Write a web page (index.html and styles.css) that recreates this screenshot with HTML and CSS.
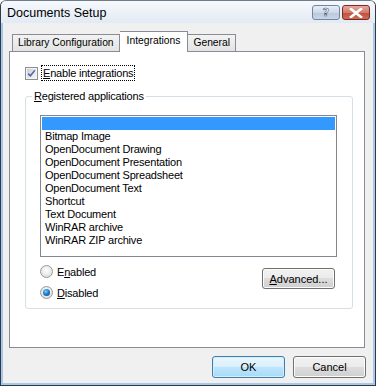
FILE: index.html
```html
<!DOCTYPE html>
<html lang="en">
<head>
    <meta charset="UTF-8">
    <title>Documents Setup</title>
    <link rel="stylesheet" href="styles.css">
</head>
<body>
    <div class="window">
        <div class="titlebar">
            <span class="title">Documents Setup</span>
            <div class="caption-buttons">
                <button class="cap-btn help-btn"><span>?</span></button>
                <button class="cap-btn close-btn">
                    <svg width="14" height="10" viewBox="0 0 14 10">
                        <path d="M2 1 L12 9 M12 1 L2 9" stroke="#fff" stroke-width="2.6" stroke-linecap="square"/>
                    </svg>
                </button>
            </div>
        </div>
        <div class="client">
            <div class="tabs">
                <div class="tab">Library Configuration</div>
                <div class="tab active">Integrations</div>
                <div class="tab">General</div>
            </div>
            <div class="panel">
                <label class="check-row">
                    <svg class="checkbox" width="13" height="13" viewBox="0 0 13 13">
                        <defs>
                            <linearGradient id="cbFill" x1="0" y1="0" x2="1" y2="1">
                                <stop offset="0" stop-color="#cbcfd5"/>
                                <stop offset="1" stop-color="#f6f6f6"/>
                            </linearGradient>
                        </defs>
                        <rect x="0.5" y="0.5" width="12" height="12" fill="#f4f4f4" stroke="#8e8f8f"/>
                        <rect x="2" y="2" width="9" height="9" fill="url(#cbFill)"/>
                        <path d="M3.2 6.6 L5.4 8.8 L9.8 3.4" fill="none" stroke="#4d64a6" stroke-width="1.5"/>
                    </svg>
                    <span class="focus"><u>E</u>nable integrations</span>
                </label>
                <fieldset class="group">
                    <legend><u>R</u>egistered applications</legend>
                    <ul class="listbox">
                        <li class="selected">&nbsp;</li>
                        <li>Bitmap Image</li>
                        <li>OpenDocument Drawing</li>
                        <li>OpenDocument Presentation</li>
                        <li>OpenDocument Spreadsheet</li>
                        <li>OpenDocument Text</li>
                        <li>Shortcut</li>
                        <li>Text Document</li>
                        <li>WinRAR archive</li>
                        <li>WinRAR ZIP archive</li>
                    </ul>
                    <div class="group-bottom">
                        <div class="radios">
                            <label class="radio-row">
                                <span class="radio"></span>
                                <span>E<u>n</u>abled</span>
                            </label>
                            <label class="radio-row">
                                <span class="radio checked"></span>
                                <span><u>D</u>isabled</span>
                            </label>
                        </div>
                        <button class="btn advanced"><u>A</u>dvanced...</button>
                    </div>
                </fieldset>
            </div>
            <div class="footer">
                <button class="btn default">OK</button>
                <button class="btn">Cancel</button>
            </div>
        </div>
    </div>
</body>
</html>
```
FILE: styles.css
```css
body {
    margin: 0;
    padding: 0;
    background: #ffffff;
    font-family: "Liberation Sans", Arial, sans-serif;
    font-size: 11px;
    letter-spacing: -0.2px;
    color: #000;
}
.window {
    width: 376px;
    height: 386px;
    box-sizing: border-box;
    border: 1px solid #2f3a46;
    border-top-color: #6f7c8a;
    border-radius: 6px 6px 0 0;
    background: #a7c8e8;
    padding: 0 2px 2px 2px;
    display: flex;
    flex-direction: column;
}
.titlebar {
    height: 22px;
    margin: 0 -2px;
    padding: 0 5px 0 6px;
    display: flex;
    align-items: center;
    justify-content: space-between;
    background: linear-gradient(#f6f9fc, #e2eaf4);
    border-radius: 5px 5px 0 0;
}
.title {
    font-family: "Liberation Sans", Arial, sans-serif;
    font-size: 12.5px;
    letter-spacing: 0;
    color: #000;
    margin-top: 1px;
}
.caption-buttons {
    display: flex;
    gap: 2px;
    margin-top: 1px;
}
.cap-btn {
    height: 15px;
    padding: 0;
    border-radius: 3px;
    display: flex;
    align-items: center;
    justify-content: center;
}
.help-btn {
    width: 28px;
    border: 1px solid #7286a0;
    background: linear-gradient(#e8eef6 0%, #cdd9e8 50%, #b8c8dc 51%, #c9d6e6 100%);
}
.help-btn span {
    font-family: "DejaVu Sans", sans-serif;
    font-size: 11px;
    font-weight: bold;
    color: #fff;
    -webkit-text-stroke: 0.6px #4a5d78;
    line-height: 1;
}
.close-btn {
    width: 28px;
    border: 1px solid #7a2a24;
    background: linear-gradient(#e8a99e 0%, #d27a6c 50%, #c14f3e 51%, #d06a54 100%);
}
.client {
    flex: 1;
    background: #f0f0f0;
    padding: 8px 6px 0 6px;
    display: flex;
    flex-direction: column;
}
.tabs {
    display: flex;
    align-items: flex-end;
    height: 20px;
    padding-left: 3px;
    position: relative;
    z-index: 1;
}
.tab {
    height: 17px;
    box-sizing: border-box;
    padding: 2px 5px 0 5px;
    border: 1px solid #898c95;
    border-bottom: none;
    border-left: none;
    background: linear-gradient(#f3f3f3, #e3e3e3);
    white-space: nowrap;
    font-size: 10.3px;
    letter-spacing: 0;
}
.tab:first-child {
    border-left: 1px solid #898c95;
}
.tab.active {
    height: 21px;
    margin-bottom: -1px;
    padding: 3px 7px 0 7px;
    background: #ffffff;
    border-left: none;
}
.panel {
    height: 297px;
    box-sizing: border-box;
    background: #ffffff;
    border: 1px solid #898c95;
    margin-right: 2px;
    padding: 13px 11px 0 15px;
}
.check-row {
    display: flex;
    align-items: center;
    gap: 2px;
}
.checkbox {
    margin-right: 1px;
}
.focus {
    border: 1px dotted #000;
    padding: 1px 1px 1px 1px;
}
.group {
    margin: 9px 0 0 0;
    padding: 13px 15px 10px 14px;
    border: 1px solid #d5dfe5;
    border-radius: 3px;
    height: 219px;
    box-sizing: border-box;
}
.group legend {
    padding: 0 2px;
    margin-left: -8px;
}
.listbox {
    list-style: none;
    margin: 0;
    padding: 1px;
    height: 142px;
    box-sizing: border-box;
    border: 1px solid #828790;
    background: #fff;
}
.listbox li {
    height: 13px;
    line-height: 13px;
    padding-left: 3px;
    white-space: nowrap;
}
.listbox li.selected {
    background: #3399ff;
}
.group-bottom {
    display: flex;
    justify-content: space-between;
    align-items: flex-start;
    margin-top: 8px;
}
.radios {
    display: flex;
    flex-direction: column;
    gap: 8px;
}
.radio-row {
    display: flex;
    align-items: center;
    gap: 4px;
}
.radio {
    width: 11px;
    height: 11px;
    border-radius: 50%;
    border: 1px solid #9a9a9a;
    background: radial-gradient(circle at 50% 40%, #ffffff 0%, #e6e6e6 60%, #cfcfcf 100%);
    display: flex;
    align-items: center;
    justify-content: center;
}
.radio.checked::after {
    content: "";
    width: 7px;
    height: 7px;
    border-radius: 50%;
    background: radial-gradient(circle at 40% 35%, #7fd0f8 0%, #1c7fd0 45%, #0d3f7a 100%);
}
.btn {
    font-family: "Liberation Sans", Arial, sans-serif;
    font-size: 11px;
    letter-spacing: 0;
    color: #000;
    height: 21px;
    padding: 0;
    border: 1px solid #707070;
    border-radius: 3px;
    background: linear-gradient(#f2f2f2 0%, #ebebeb 49%, #dddddd 50%, #cfcfcf 100%);
    box-shadow: inset 0 0 0 1px #fcfcfc;
}
.advanced {
    width: 73px;
    margin: 3px 2px 0 0;
}
.footer {
    display: flex;
    justify-content: flex-end;
    gap: 8px;
    padding: 8px 1px 0 0;
}
.footer .btn {
    width: 73px;
    height: 22px;
}
.btn.default {
    border-color: #3c7fb1;
    background: linear-gradient(#eaf6fd 0%, #d9f0fc 49%, #bee6fd 50%, #a7d9f5 100%);
    box-shadow: inset 0 0 0 1px #d6eefc;
}
```
